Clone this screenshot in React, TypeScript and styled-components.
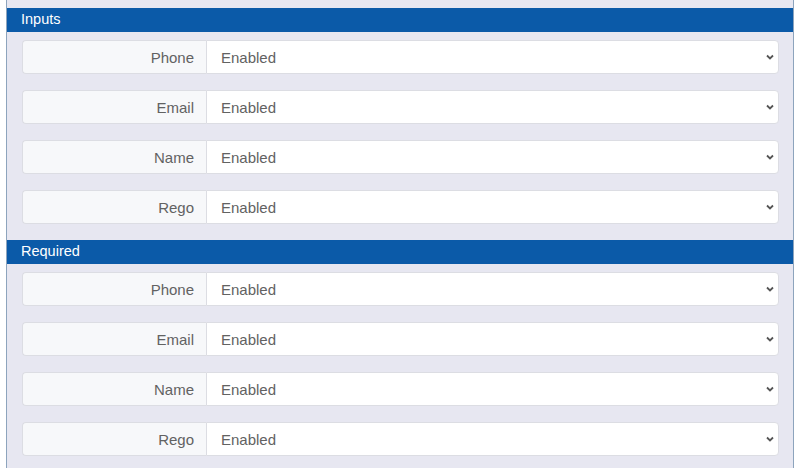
import styled, { createGlobalStyle } from 'styled-components'

const GlobalStyle = createGlobalStyle`
  html, body {
    margin: 0;
    padding: 0;
    background: #ffffff;
    font-family: "Liberation Sans", Arial, sans-serif;
  }
`

const sections = [
  { id: 0, title: 'Inputs', fields: ['Phone', 'Email', 'Name', 'Rego'] },
  { id: 1, title: 'Required', fields: ['Phone', 'Email', 'Name', 'Rego'] },
]

const Page = styled.div`
  padding: 0 6px;
  height: 468px;
  overflow: hidden;
`

const Panel = styled.div`
  background-color: #e7e7f1;
  border-left: 1px solid #8da4bd;
  border-right: 1px solid #8da4bd;
  padding-top: 8px;
  height: 100%;
  box-sizing: border-box;
`

const Header = styled.div`
  height: 24px;
  line-height: 22px;
  background-color: #0b5aa8;
  color: #ffffff;
  font-size: 14.5px;
  padding-left: 14px;
  margin-bottom: 8px;
`

const Row = styled.div`
  display: flex;
  margin: 0 14px 16px 15px;
  height: 34px;
`

const Label = styled.div`
  width: 184px;
  box-sizing: border-box;
  display: flex;
  align-items: center;
  justify-content: flex-end;
  padding-right: 12px;
  font-size: 15px;
  color: #626262;
  background-color: #f7f8fa;
  border: 1px solid #dcdde3;
  border-right: none;
  border-radius: 4px 0 0 4px;
`

const Select = styled.div`
  flex: 1;
  display: flex;
  align-items: center;
  justify-content: space-between;
  padding: 0 3px 0 14px;
  font-size: 15px;
  color: #626262;
  background-color: #ffffff;
  border: 1px solid #dcdde3;
  border-radius: 0 4px 4px 0;
`

const Arrow = styled.svg`
  flex-shrink: 0;
  width: 10px;
  height: 8px;
`

const Chevron = () => (
  <Arrow viewBox="0 0 10 8">
    <path d="M2 2.5 L5 5.5 L8 2.5" fill="none" stroke="#555" strokeWidth="1.8" />
  </Arrow>
)

function App() {
  return (
    <>
      <GlobalStyle />
      <Page>
        <Panel>
          {sections.map((section) => (
            <div key={section.id}>
              <Header>{section.title}</Header>
              {section.fields.map((field) => (
                <Row key={field}>
                  <Label>{field}</Label>
                  <Select>
                    <span>Enabled</span>
                    <Chevron />
                  </Select>
                </Row>
              ))}
            </div>
          ))}
        </Panel>
      </Page>
    </>
  )
}

export default App
